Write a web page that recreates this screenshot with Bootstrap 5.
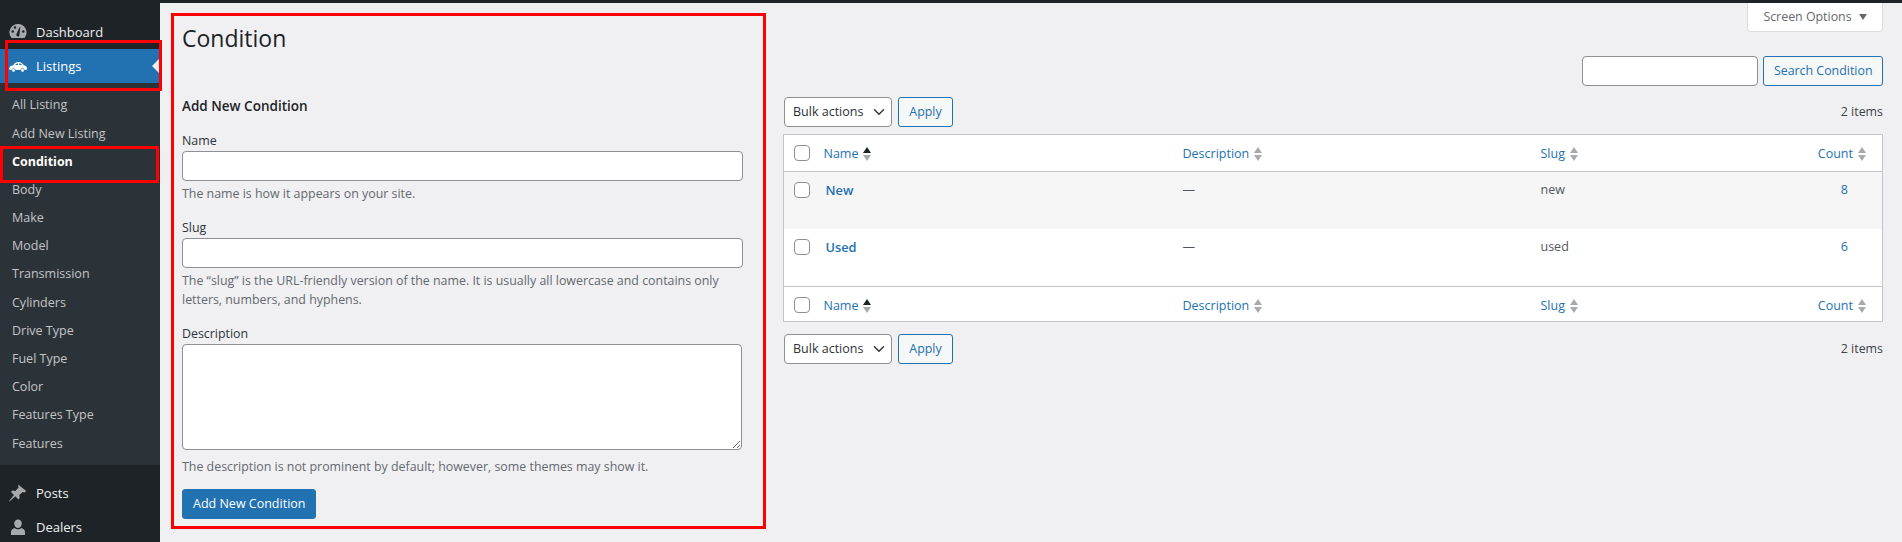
<!DOCTYPE html>
<html lang="en">
<head>
<meta charset="utf-8">
<title>Condition</title>
<link href="https://cdn.jsdelivr.net/npm/bootstrap@5.3.0/dist/css/bootstrap.min.css" rel="stylesheet">
<style>
html,body{height:542px;overflow:hidden}
body{background:#f0f0f2;color:#3c434a;font-family:"Open Sans","Noto Sans",sans-serif;font-size:12.4px;line-height:1.4}
.wp-frame{height:539px;margin-top:3px;position:relative}
.wp-topbar{height:3px;background:#1d2327;position:absolute;top:0;left:0;right:0}
.wp-side{width:160px;background:#1d2327;flex:none;padding-top:12px;height:539px;overflow:hidden}
.wp-top{display:flex;align-items:center;height:34px;color:#f0f0f1;font-size:13px;text-decoration:none}
.wp-top svg{width:20px;height:20px;margin:0 8px 0 8px;flex:none;fill:#a7aaad}
.wp-top.on{background:#2271b1;color:#fff;position:relative}
.wp-top.on svg{fill:#fff}
.wp-top.on::after{content:"";position:absolute;right:0;top:9px;border:8px solid transparent;border-right-color:#f0f0f1;border-left:0}
.wp-sub{background:#2c3338;padding:8px 0 8px;margin-bottom:11px}
.wp-sub a{display:flex;align-items:center;height:28.2px;padding-left:12px;color:#c3c4c7;text-decoration:none;font-size:12.5px}
.wp-sub a.cur{color:#fff;font-weight:700}
.wp-main{flex:1;min-width:0;padding:0 19px 0 22px;position:relative}
.wp-col-l{width:561px;flex:none;padding-top:21px}
.wp-col-r{flex:1;min-width:0;margin-left:40px}
.wp-h1{font-size:23px;font-weight:400;color:#1d2327;line-height:29px;margin:0 0 44px}
.wp-h2{font-size:13.5px;font-weight:600;color:#1d2327;line-height:19px;margin:0 0 16px}
.wp-lab{display:block;color:#2c3338;line-height:17px;margin:0 0 2px}
.wp-help{color:#646970;margin:0;line-height:19px}
.wp-hint{margin-top:3px}
.wp-hint-ta{margin-top:7px}
.wp-fld{margin-bottom:16px}
.wp-fld-last{margin-bottom:13px}
.form-control.wp-in,.form-select.wp-in{border-color:#8c8f94;border-radius:4px;height:30px;min-height:30px;padding:0 8px;font-size:13px;color:#2c3338;box-shadow:none;background-color:#fff}
.form-control.wp-ta{height:106px;width:560px;resize:vertical;border-color:#8c8f94;border-radius:4px}
.form-select.wp-in{width:108px;margin-left:1px;padding:0 20px 0 8px;background-size:14px 12px;background-position:right 5px center;font-size:12.5px;flex:none}
.btn.wp-pri{background:#2271b1;border-color:#2271b1;color:#fff;font-size:12.5px;height:30px;padding:0 10px;border-radius:3px;line-height:28px}
.btn.wp-sec{background:#f6f7f7;border-color:#2271b1;color:#2271b1;font-size:12.4px;height:30px;padding:0 9.500px;border-radius:3px;line-height:28px}
.btn.wp-apply{width:55px;padding:0}
.wp-scr{position:absolute;right:19px;top:0;width:136px;height:29px;background:#fff;border:1px solid #dcdcde;border-top:0;border-radius:0 0 4px 4px;color:#646970;display:flex;align-items:center;justify-content:center;gap:7px}
.wp-tri{border:4.500px solid transparent;border-top:6px solid #646970;border-bottom:0;display:inline-block}
.wp-search{padding-top:53px;height:83px;gap:5px}
.wp-search .wp-in{width:176px}
.wp-bar{height:30px;gap:6px;margin-top:11px}
.wp-tbl{margin:7px 0 12px;--bs-table-bg:transparent;border:1px solid #c3c4c7;background:#fff;table-layout:fixed;width:100%}
.wp-tbl th,.wp-tbl td{border:0;padding:8px;font-weight:400;font-size:12.5px;color:#50575e;vertical-align:top}
.wp-tbl thead th{height:37px;border-bottom:1px solid #c3c4c7;padding:9px 8px 0;color:#2271b1}
.wp-tbl tfoot th{height:35px;border-top:1px solid #c3c4c7;padding:9px 8px 0;color:#2271b1}
.wp-tbl tbody td{height:57px;padding-top:9px}
.wp-tbl tbody tr:first-child td{background:#f6f6f7}
.wp-tbl tbody tr:last-child td{background:#fff;height:58px}
.wp-tbl .wp-num{padding-right:34px}
.wp-cb{width:16px;height:16px;border:1px solid #8c8f94;border-radius:4px;background:#fff;margin:1px 0 0 2px;display:block;float:none;appearance:none}
.wp-tbl a{color:#2271b1;text-decoration:none}
.wp-tbl thead a,.wp-tbl tfoot a{display:inline-block;margin-top:1px}
.wp-tbl strong a{font-weight:600;font-size:12.800px;margin-left:1px;display:inline-block;margin-top:1px}
.wp-name{margin-left:-1px}
.wp-sort{display:inline-flex;flex-direction:column;gap:2px;vertical-align:middle;margin-left:5px;position:relative;top:-1px}
.wp-sort i{display:block;width:0;height:0;border-left:4.500px solid transparent;border-right:4.500px solid transparent}
.wp-sort i:first-child{border-bottom:6.500px solid #a7aaad}
.wp-sort i:last-child{border-top:6.500px solid #a7aaad}
.wp-sort.asc i:first-child{border-bottom-color:#1d2327}
.wp-note{position:absolute;border:3px solid #f00;pointer-events:none}
.wp-n1{left:5px;top:40px;width:157px;height:51px}
.wp-n2{left:0;top:146px;width:159px;height:37px}
.wp-n3{left:171px;top:13px;width:595px;height:516px}
.wp-c1{width:33px}.wp-c2{width:358px}.wp-c3{width:250px}
</style>
</head>
<body>
<div class="wp-topbar"></div>
<div class="d-flex wp-frame">
  <nav class="wp-side">
    <a class="wp-top" href="#"><svg viewBox="0 0 20 20"><path fill-rule="evenodd" d="M10 2a8.500 8.500 0 0 0-7 13.300l.5.7h13l.5-.7A8.500 8.500 0 0 0 10 2zM4.700 10.800a1.300 1.300 0 1 1 0-2.600 1.300 1.300 0 0 1 0 2.600zm2.300-4a1.300 1.300 0 1 1 0-2.600 1.300 1.300 0 0 1 0 2.600zm4.300 7.300a1.800 1.800 0 0 1-3-1.600l3.300-7.500.7.200-1 8.900zM15.300 10.800a1.300 1.300 0 1 1 0-2.600 1.300 1.300 0 0 1 0 2.600z"/></svg>Dashboard</a>
    <a class="wp-top on" href="#"><svg viewBox="0 0 20 20"><path fill-rule="evenodd" d="M2 10.500c1-.6 2.300-1 3.200-1.300C6.500 7.200 8 6 10.500 6c2.700 0 4 1.300 5.300 3.300 1.400.3 2.700.9 3 2 .2.800.2 1.700-.2 2.700h-2a2.200 2.200 0 0 0-4.300 0H7.700a2.200 2.200 0 0 0-4.300 0H1.500c-.5-1.300-.2-2.700.5-3.500zM7 9h3V7.400C8.700 7.400 7.700 8 7 9zm4.200 0h3C13.500 8 12.500 7.400 11.200 7.400zM5.500 12.800a1.500 1.500 0 1 1 0 3 1.500 1.500 0 0 1 0-3zm9 0a1.500 1.500 0 1 1 0 3 1.500 1.500 0 0 1 0-3z"/></svg>Listings</a>
    <div class="wp-sub">
      <a href="#">All Listing</a><a href="#">Add New Listing</a><a class="cur" href="#">Condition</a><a href="#">Body</a><a href="#">Make</a><a href="#">Model</a><a href="#">Transmission</a><a href="#">Cylinders</a><a href="#">Drive Type</a><a href="#">Fuel Type</a><a href="#">Color</a><a href="#">Features Type</a><a href="#">Features</a>
    </div>
    <a class="wp-top" href="#"><svg viewBox="0 0 20 20"><path d="M10.400 1.800l7.800 6.300-1.700 1.300-1.700-.5-3.500 3.200.4 3-1.300 1.300-3-3.100-5.900 5.200-.4-.4 4.900-6.100-3-3 1.400-1.400 3 .5 3.200-3.500-.5-1.700z"/></svg>Posts</a>
    <a class="wp-top" href="#"><svg viewBox="0 0 20 20"><path d="M10 2.500a3.800 3.800 0 0 1 3.800 4c0 2.500-1.700 4.500-3.800 4.500S6.200 9 6.200 6.500a3.800 3.800 0 0 1 3.800-4zM6.500 11c1 .9 2.200 1.300 3.500 1.300s2.500-.4 3.500-1.300c2 .7 3.500 2 3.500 3.800V18H3v-3.200C3 13 4.500 11.700 6.500 11z"/></svg>Dealers</a>
  </nav>
  <main class="wp-main flex-grow-1 d-flex">
    <div class="wp-scr">Screen Options <span class="wp-tri"></span></div>
    <section class="wp-col-l">
      <h1 class="wp-h1">Condition</h1>
      <h2 class="wp-h2">Add New Condition</h2>
      <div class="wp-fld">
        <label class="wp-lab" for="fName">Name</label>
        <input id="fName" class="form-control wp-in" type="text">
        <p class="wp-help wp-hint">The name is how it appears on your site.</p>
      </div>
      <div class="wp-fld">
        <label class="wp-lab" for="fSlug">Slug</label>
        <input id="fSlug" class="form-control wp-in" type="text">
        <p class="wp-help wp-hint">The “slug” is the URL-friendly version of the name. It is usually all lowercase and contains only letters, numbers, and hyphens.</p>
      </div>
      <div class="wp-fld wp-fld-last">
        <label class="wp-lab" for="fDesc">Description</label>
        <textarea id="fDesc" class="form-control wp-ta"></textarea>
        <p class="wp-help wp-hint-ta">The description is not prominent by default; however, some themes may show it.</p>
      </div>
      <button class="btn wp-pri" type="button">Add New Condition</button>
    </section>
    <section class="wp-col-r">
      <div class="d-flex justify-content-end wp-search">
        <input class="form-control wp-in" type="search" aria-label="Search">
        <button class="btn wp-sec" type="button">Search Condition</button>
      </div>
      <div class="d-flex align-items-center wp-bar">
        <select class="form-select wp-in" aria-label="Bulk actions"><option>Bulk actions</option></select>
        <button class="btn wp-sec wp-apply" type="button">Apply</button>
        <span class="ms-auto">2 items</span>
      </div>
      <table class="table wp-tbl">
        <colgroup><col class="wp-c1"><col class="wp-c2"><col class="wp-c2"><col class="wp-c3"><col></colgroup>
        <thead><tr>
          <th><input class="wp-cb" type="checkbox" aria-label="Select all"></th>
          <th><a class="wp-name" href="#">Name<span class="wp-sort asc"><i></i><i></i></span></a></th>
          <th><a href="#">Description<span class="wp-sort"><i></i><i></i></span></a></th>
          <th><a href="#">Slug<span class="wp-sort"><i></i><i></i></span></a></th>
          <th class="text-end pe-3"><a href="#">Count<span class="wp-sort"><i></i><i></i></span></a></th>
        </tr></thead>
        <tbody>
          <tr><td><input class="wp-cb" type="checkbox" aria-label="Select New"></td><td><strong><a href="#">New</a></strong></td><td>—</td><td>new</td><td class="text-end wp-num"><a href="#">8</a></td></tr>
          <tr><td><input class="wp-cb" type="checkbox" aria-label="Select Used"></td><td><strong><a href="#">Used</a></strong></td><td>—</td><td>used</td><td class="text-end wp-num"><a href="#">6</a></td></tr>
        </tbody>
        <tfoot><tr>
          <th><input class="wp-cb" type="checkbox" aria-label="Select all"></th>
          <th><a class="wp-name" href="#">Name<span class="wp-sort asc"><i></i><i></i></span></a></th>
          <th><a href="#">Description<span class="wp-sort"><i></i><i></i></span></a></th>
          <th><a href="#">Slug<span class="wp-sort"><i></i><i></i></span></a></th>
          <th class="text-end pe-3"><a href="#">Count<span class="wp-sort"><i></i><i></i></span></a></th>
        </tr></tfoot>
      </table>
      <div class="d-flex align-items-center wp-bar mt-0">
        <select class="form-select wp-in" aria-label="Bulk actions"><option>Bulk actions</option></select>
        <button class="btn wp-sec wp-apply" type="button">Apply</button>
        <span class="ms-auto">2 items</span>
      </div>
    </section>
  </main>
</div>
<div class="wp-note wp-n1"></div>
<div class="wp-note wp-n2"></div>
<div class="wp-note wp-n3"></div>
<script src="https://cdn.jsdelivr.net/npm/bootstrap@5.3.0/dist/js/bootstrap.bundle.min.js"></script>
</body>
</html>
